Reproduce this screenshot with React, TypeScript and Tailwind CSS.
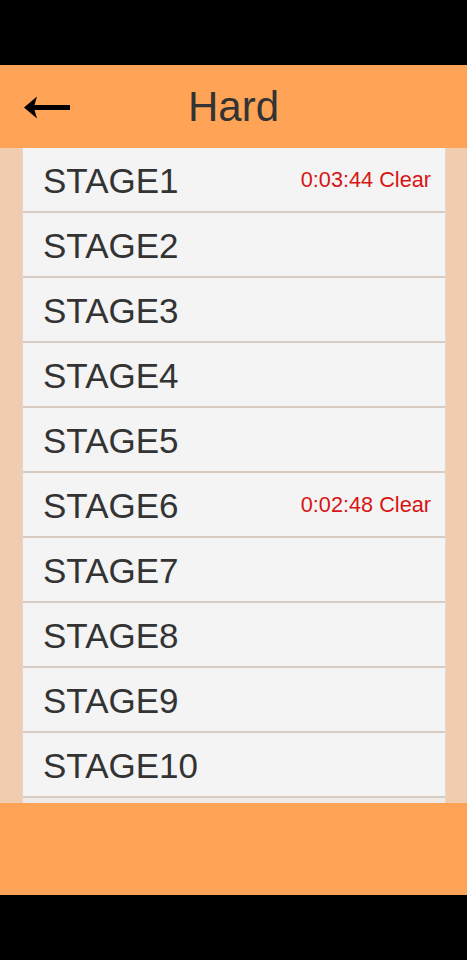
import React from "react";

const stages = [
  { name: "STAGE1", time: "0:03:44 Clear" },
  { name: "STAGE2" },
  { name: "STAGE3" },
  { name: "STAGE4" },
  { name: "STAGE5" },
  { name: "STAGE6", time: "0:02:48 Clear" },
  { name: "STAGE7" },
  { name: "STAGE8" },
  { name: "STAGE9" },
  { name: "STAGE10" },
];

function BackArrow() {
  return (
    <svg width="46" height="23" viewBox="0 0 46 23">
      <path d="M0 11.5 L13 0.5 L10.5 9 L46 9 L46 14 L10.5 14 L13 22.5 Z" fill="#000" />
    </svg>
  );
}

export default function App() {
  return (
    <div className="flex h-[960px] w-[467px] flex-col bg-black font-['Liberation_Sans',Arial,sans-serif]">
      <div className="h-[65px] shrink-0 bg-black" />
      <header className="relative flex h-[83px] shrink-0 items-center justify-center bg-[#ffa357]">
        <button className="absolute left-[24px] top-[31px] flex items-center">
          <BackArrow />
        </button>
        <h1 className="text-[42px] leading-none text-[#333333]">Hard</h1>
      </header>
      <main className="h-[655px] shrink-0 overflow-hidden bg-[#f0cdb0] pl-[22px] pr-[21px]">
        <ul className="flex flex-col border-x border-[#e2d6cc]">
          {stages.map((s) => (
            <li
              key={s.name}
              className="flex h-[65px] shrink-0 items-center justify-between border-b-2 border-[#d8cbc1] bg-[#f4f4f4] pl-[20px] pr-[14px]"
            >
              <span className="pt-[1px] text-[35px] leading-none text-[#333333]">{s.name}</span>
              {s.time && (
                <span className="pt-[1px] text-[21.7px] leading-none text-[#d71515]">{s.time}</span>
              )}
            </li>
          ))}
          <li className="h-[65px] shrink-0 bg-[#eeeae7]" />
        </ul>
      </main>
      <footer className="h-[92px] shrink-0 bg-[#ffa357]" />
      <div className="flex-1 bg-black" />
    </div>
  );
}
